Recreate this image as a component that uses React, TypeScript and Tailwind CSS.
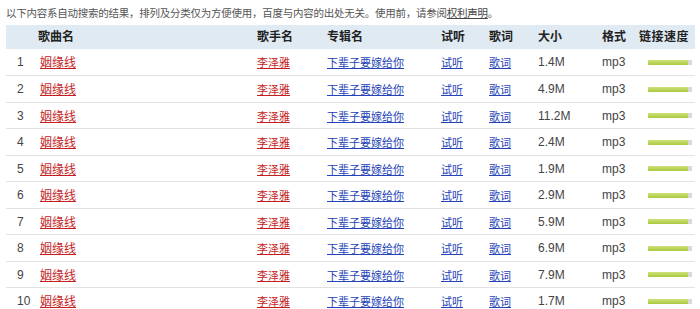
import React from 'react'

const sizes = ['1.4M', '4.9M', '11.2M', '2.4M', '1.9M', '2.9M', '5.9M', '6.9M', '7.9M', '1.7M']

export default function App() {
    return (
        <div className="w-[700px] h-[309px] overflow-hidden bg-white text-[#333]" style={{ fontFamily: '"Liberation Sans", "Noto Sans CJK SC", sans-serif' }}>
            {/* notice */}
            <div className="pl-[6px] pt-[6px] h-[25px] text-[10.5px] tracking-[-0.25px] leading-[14px] text-[#555] whitespace-nowrap">
                以下内容系自动搜索的结果，排列及分类仅为方便使用，百度与内容的出处无关。使用前，请参阅<span className="underline text-[#444]">权利声明</span>。
            </div>

            <table className="ml-[6px] w-[689px] border-collapse table-fixed">
                <colgroup>
                    <col className="w-[32px]" />
                    <col className="w-[219px]" />
                    <col className="w-[70px]" />
                    <col className="w-[114px]" />
                    <col className="w-[48px]" />
                    <col className="w-[49px]" />
                    <col className="w-[62px]" />
                    <col className="w-[39px]" />
                    <col className="w-[56px]" />
                </colgroup>
                <thead>
                    <tr className="h-[24px] bg-[#dfeaf3] text-[12px] font-bold text-[#222] text-left">
                        <th></th>
                        <th className="font-bold">歌曲名</th>
                        <th className="font-bold">歌手名</th>
                        <th className="font-bold">专辑名</th>
                        <th className="font-bold">试听</th>
                        <th className="font-bold">歌词</th>
                        <th className="font-bold">大小</th>
                        <th className="font-bold pl-[2px]">格式</th>
                        <th className="font-bold tracking-[0.5px]">链接速度</th>
                    </tr>
                </thead>
                <tbody>
                    {sizes.map((size, i) => (
                        <tr key={i} className={`${i % 2 === 0 ? 'h-[26px]' : 'h-[27px]'} border-b border-[#e2e2e2]`}>
                            <td className="pl-[11px] pt-[1px] text-[12px] text-[#444]">{i + 1}</td>
                            <td className="pl-[2px] pt-[1px]">
                                <a className="underline text-[12px] text-[#c41e1e]">姻缘线</a>
                            </td>
                            <td className="pt-[1px]">
                                <a className="underline text-[11px] text-[#c41e1e]">李泽雅</a>
                            </td>
                            <td className="pt-[1px]">
                                <a className="underline text-[11px] text-[#2443b8]">下辈子要嫁给你</a>
                            </td>
                            <td className="pt-[1px]">
                                <a className="underline text-[11px] text-[#2443b8]">试听</a>
                            </td>
                            <td className="pt-[1px]">
                                <a className="underline text-[11px] text-[#2443b8]">歌词</a>
                            </td>
                            <td className="pt-[1px] text-[12px] text-[#444]">{size}</td>
                            <td className="pt-[1px] text-[12px] text-[#444] pl-[2px]">mp3</td>
                            <td className="pt-[1px]">
                                <div className="ml-[9px] w-[44px] h-[5px] bg-[#d9d9d9] flex">
                                    <div className="w-[40px] h-full bg-gradient-to-b from-[#cfe27a] to-[#a9c93c]" />
                                </div>
                            </td>
                        </tr>
                    ))}
                </tbody>
            </table>
        </div>
    )
}
